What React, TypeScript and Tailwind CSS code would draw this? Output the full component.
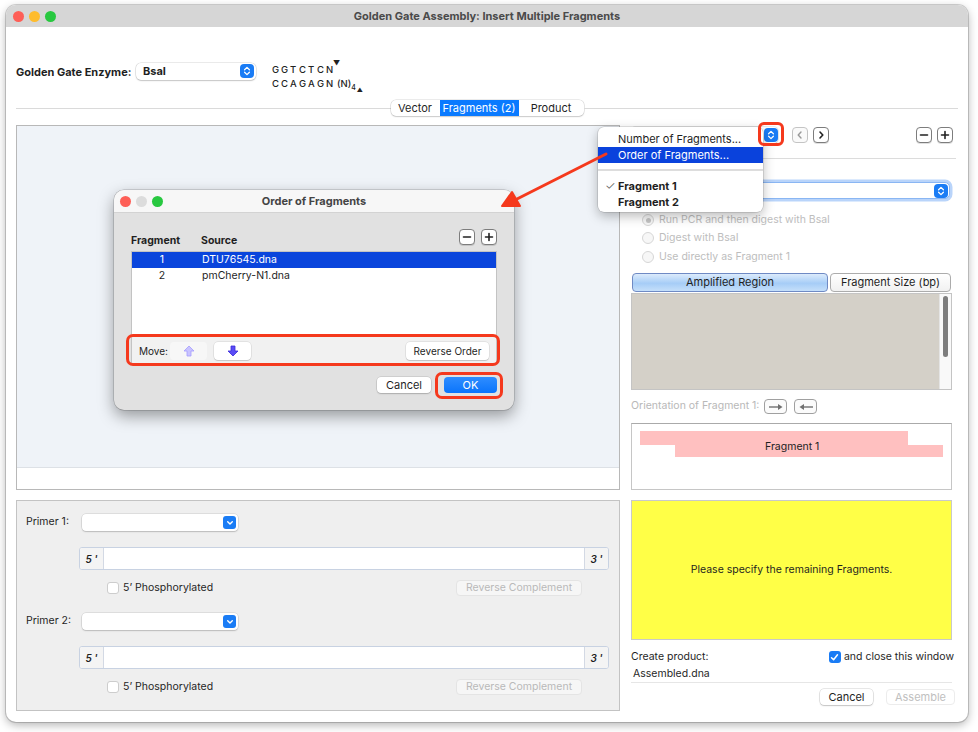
import React from "react";

function Stepper() {
  return (
    <span className="inline-flex w-[14px] h-[14px] rounded-[4px] bg-[#1a7cf5] items-center justify-center shrink-0">
      <svg width="8" height="10" viewBox="0 0 8 10" fill="none">
        <path d="M1.6 3.7L4 1.4L6.4 3.7M1.6 6.3L4 8.6L6.4 6.3" stroke="white" strokeWidth="1.3" strokeLinecap="round" strokeLinejoin="round" />
      </svg>
    </span>
  );
}

function ChevronBox() {
  return (
    <span className="inline-flex w-[13px] h-[13px] rounded-[3px] bg-[#1a7cf5] items-center justify-center shrink-0">
      <svg width="8" height="6" viewBox="0 0 8 6" fill="none">
        <path d="M1.7 1.8L4 4.1L6.3 1.8" stroke="white" strokeWidth="1.4" strokeLinecap="round" strokeLinejoin="round" />
      </svg>
    </span>
  );
}

function SmallBtn({ kind, dim }: { kind: "minus" | "plus" | "left" | "right"; dim?: boolean }) {
  const c = dim ? "#9a9a9a" : "#222";
  return (
    <span
      className={
        dim
          ? "inline-flex w-[16px] h-[16px] rounded-[4px] bg-[#fafafa] border border-[#c4c4c4] items-center justify-center shrink-0"
          : "inline-flex w-[16px] h-[16px] rounded-[4px] bg-white border border-[#7d7d7d] shadow-[0_1px_0_rgba(0,0,0,0.12)] items-center justify-center shrink-0"
      }
    >
      <svg width="10" height="10" viewBox="0 0 10 10" fill="none">
        {kind === "minus" && <path d="M1.5 5H8.5" stroke={c} strokeWidth="1.6" strokeLinecap="round" />}
        {kind === "plus" && <path d="M1.5 5H8.5M5 1.5V8.5" stroke={c} strokeWidth="1.6" strokeLinecap="round" />}
        {kind === "left" && <path d="M6 2L3.2 5L6 8" stroke={c} strokeWidth="1.4" strokeLinecap="round" strokeLinejoin="round" />}
        {kind === "right" && <path d="M4 2L6.8 5L4 8" stroke={c} strokeWidth="1.6" strokeLinecap="round" strokeLinejoin="round" />}
      </svg>
    </span>
  );
}

function Primer({ n }: { n: number }) {
  return (
    <>
      <div className="flex items-center h-[17px]">
        <span className="w-[65px] pl-[9px]">Primer {n}:</span>
        <div className="w-[156px] h-[17px] bg-white rounded-[4px] shadow-[0_0_0_0.5px_rgba(0,0,0,0.14),0_1px_1.5px_rgba(0,0,0,0.16)] flex items-center justify-end pr-[2px]">
          <ChevronBox />
        </div>
      </div>
      <div className="mt-[16px] ml-[62px] mr-[10px] h-[23px] flex border border-[#c8d2e2] rounded-[3px] bg-white overflow-hidden">
        <span className="w-[24px] bg-[#f4f4f4] border-r border-[#d3d9e4] flex items-center justify-center italic font-semibold text-[10px]">5 '</span>
        <span className="flex-1" />
        <span className="w-[24px] bg-[#f4f4f4] border-l border-[#d3d9e4] flex items-center justify-center italic font-semibold text-[10px]">3 '</span>
      </div>
      <div className="mt-[10px] flex items-center h-[16px]">
        <span className="ml-[90px] w-[12px] h-[12px] rounded-[3px] bg-white border border-[#cdcdcd]" />
        <span className="ml-[4px]">5’ Phosphorylated</span>
        <span className="ml-auto mr-[37px] w-[126px] h-[16px] rounded-[4px] bg-[#f6f6f6] border border-[#e4e4e4] text-[#b9b9b9] flex items-center justify-center">
          Reverse Complement
        </span>
      </div>
    </>
  );
}

function Radio({ on, label }: { on?: boolean; label: string }) {
  return (
    <div className="flex items-center h-[12px]">
      <span className="ml-[11px] w-[12px] h-[12px] rounded-full border border-[#d6d6d6] bg-[#f7f7f7] flex items-center justify-center">
        {on && <span className="w-[5px] h-[5px] rounded-full bg-[#c4c4c4]" />}
      </span>
      <span className="ml-[5px] text-[#bdbdbd]">{label}</span>
    </div>
  );
}

function OrientBtn({ dir }: { dir: "r" | "l" }) {
  return (
    <span className="inline-flex w-[23px] h-[15px] rounded-[4px] border border-[#a0a0a0] bg-[#fbfbfb] items-center justify-center">
      <svg width="16" height="8" viewBox="0 0 16 8" fill="none">
        {dir === "r" ? (
          <>
            <path d="M1 4H13" stroke="#707070" strokeWidth="1.4" />
            <path d="M10 1L14.5 4L10 7Z" fill="#707070" />
          </>
        ) : (
          <>
            <path d="M3 4H15" stroke="#707070" strokeWidth="1.4" />
            <path d="M6 1L1.5 4L6 7Z" fill="#707070" />
          </>
        )}
      </svg>
    </span>
  );
}

function MoveArrow({ up }: { up?: boolean }) {
  return up ? (
    <svg width="12" height="12" viewBox="0 0 12 12">
      <path d="M6 1L11 6H8V11H4V6H1Z" fill="#c9c3ff" stroke="#a49cff" strokeWidth="0.8" strokeLinejoin="round" />
    </svg>
  ) : (
    <svg width="12" height="12" viewBox="0 0 12 12">
      <path d="M6 11L11 6H8V1H4V6H1Z" fill="#5a4cf6" stroke="#3a2bd8" strokeWidth="0.8" strokeLinejoin="round" />
    </svg>
  );
}

export default function App() {
  return (
    <div className="relative w-[978px] h-[732px] overflow-hidden bg-white pt-[5px] pl-[6px] font-['Inter',sans-serif] text-[10.5px] text-[#1f1f1f] leading-none">
      {/* main window */}
      <div className="w-[962px] h-[717px] rounded-[10px] bg-white overflow-hidden flex flex-col shadow-[0_0_0_1px_rgba(0,0,0,0.16),0_3px_10px_rgba(0,0,0,0.3)]">
        <div className="h-[22px] shrink-0 bg-[#d6d6d6] grid grid-cols-[1fr_auto_1fr] items-center px-[7px]">
          <div className="flex gap-[5px]">
            <span className="w-[11px] h-[11px] rounded-full bg-[#fe5f57]" />
            <span className="w-[11px] h-[11px] rounded-full bg-[#febc2e]" />
            <span className="w-[11px] h-[11px] rounded-full bg-[#28c840]" />
          </div>
          <div className="font-bold text-[#4a4a4a] text-[11px]">Golden Gate Assembly: Insert Multiple Fragments</div>
          <div />
        </div>

        <div className="flex-1 px-[10px] flex flex-col">
          {/* enzyme row */}
          <div className="mt-[33px] h-[30px] flex items-start">
            <span className="w-[120px] mt-[7px] font-bold text-[11px]">Golden Gate Enzyme:</span>
            <div className="mt-[3px] w-[120px] h-[17px] bg-white rounded-[5px] shadow-[0_0_0_0.5px_rgba(0,0,0,0.16),0_1px_1.5px_rgba(0,0,0,0.16)] flex items-center pl-[7px] pr-[2px]">
              <span className="font-bold text-[11px]">BsaI</span>
              <span className="ml-auto">
                <Stepper />
              </span>
            </div>
            <div className="ml-[16px] mt-[3px] text-[9.5px] font-medium text-[#222]">
              <div className="flex items-start h-[14px]">
                {"GGTCTCN".split("").map((c, i) => (
                  <span key={i} className="w-[9px] mt-[2px]">{c}</span>
                ))}
                <span className="text-[7px] -ml-[2px] -mt-[3px]">▼</span>
              </div>
              <div className="flex items-start h-[14px]">
                {"CCAGAGN".split("").map((c, i) => (
                  <span key={i} className="w-[9px] mt-[2px]">{c}</span>
                ))}
                <span className="mt-[2px] ml-[2px]">(N)</span>
                <span className="mt-[7px] text-[7px]">4</span>
                <span className="mt-[10px] ml-[1px] text-[6px]">▲</span>
              </div>
            </div>
          </div>

          {/* tabs */}
          <div className="mt-[10px] h-[16px] flex items-center">
            <div className="flex-1 h-px bg-[#dadada]" />
            <div className="flex h-[16px] rounded-[5px] bg-white overflow-hidden shadow-[0_0_0_0.5px_rgba(0,0,0,0.16),0_1px_1.5px_rgba(0,0,0,0.14)] text-[11px]">
              <span className="w-[49px] flex items-center justify-center">Vector</span>
              <span className="w-[79px] flex items-center justify-center bg-[#0a7aff] text-white">Fragments (2)</span>
              <span className="w-[65px] flex items-center justify-center">Product</span>
            </div>
            <div className="flex-1 h-px bg-[#dadada]" />
          </div>

          {/* main */}
          <div className="mt-[9px] flex gap-[11px]">
            {/* left */}
            <div className="w-[604px] flex flex-col">
              <div className="h-[365px] border border-[#b8b8b8] bg-[#eff3f8] flex flex-col">
                <div className="flex-1" />
                <div className="h-[22px] bg-white border-t border-[#dde1e6]" />
              </div>
              <div className="mt-[10px] h-[211px] border border-[#c3c3c3] bg-[#efefef] pt-[13px] flex flex-col">
                <Primer n={1} />
                <div className="h-[17px]" />
                <Primer n={2} />
              </div>
            </div>

            {/* right */}
            <div className="w-[321px] flex flex-col">
              <div className="mt-[2px] h-[16px] flex items-center">
                <div className="w-[147px] h-[16px] rounded-[4px] bg-white shadow-[0_0_0_0.5px_rgba(0,0,0,0.16),0_1px_1.5px_rgba(0,0,0,0.14)] flex items-center justify-end">
                  <Stepper />
                </div>
                <span className="ml-[14px]">
                  <SmallBtn kind="left" dim />
                </span>
                <span className="ml-[5px]">
                  <SmallBtn kind="right" />
                </span>
                <span className="ml-auto">
                  <SmallBtn kind="minus" />
                </span>
                <span className="ml-[5px] -mr-px">
                  <SmallBtn kind="plus" />
                </span>
              </div>
              <div className="mt-[15px] h-px bg-[#dcdcdc] -mr-[4px]" />
              <div className="mt-[23px] h-[17px] flex items-center">
                <span className="w-[50px]" />
                <div className="flex-1 mr-[2px] h-[17px] bg-white rounded-[5px] border border-[#8ab6f3] shadow-[0_0_0_2.5px_rgba(100,160,245,0.45)] flex items-center justify-end pr-[1px]">
                  <Stepper />
                </div>
              </div>
              <div className="mt-[15px] flex flex-col">
                <Radio on label="Run PCR and then digest with BsaI" />
                <div className="h-[6px]" />
                <Radio label="Digest with BsaI" />
                <div className="h-[7px]" />
                <Radio label="Use directly as Fragment 1" />
              </div>
              <div className="mt-[10px] h-[20px] flex items-start">
                <span className="ml-[1px] w-[196px] h-[19px] rounded-[4px] border border-[#6f8ac4] bg-[linear-gradient(#dcebfc,#a6cdf7_55%,#c5dffa)] flex items-center justify-center text-[11px]">
                  Amplified Region
                </span>
                <span className="ml-[2px] w-[121px] h-[19px] rounded-[4px] border border-[#acacac] bg-[linear-gradient(#ffffff,#f1f1f1)] flex items-center justify-center text-[11px]">
                  Fragment Size (bp)
                </span>
              </div>
              <div className="h-[97px] border border-[#c4c4c4] bg-[#d4d0c8] flex justify-end">
                <div className="w-[12px] bg-[#f9f9f9] border-l border-[#e4e4e4] pt-[2px] flex justify-center">
                  <div className="w-[5px] h-[61px] rounded-full bg-[#7e7e7e]" />
                </div>
              </div>
              <div className="mt-[9px] h-[15px] flex items-center">
                <span className="w-[133px] text-[#b8b8b8]">Orientation of Fragment 1:</span>
                <OrientBtn dir="r" />
                <span className="ml-[7px]">
                  <OrientBtn dir="l" />
                </span>
              </div>
              <div className="mt-[9px] h-[67px] border border-[#c6c6c6] border-t-[#aaaaaa] bg-white relative">
                <svg width="321" height="66" viewBox="0 0 321 66" className="block">
                  <rect x="8" y="7" width="268" height="14" fill="#ffc0c0" />
                  <rect x="43" y="21" width="268" height="12" fill="#ffc0c0" />
                </svg>
                <span className="absolute left-[133px] top-[18px] text-[#222]">Fragment 1</span>
              </div>
              <div className="mt-[10px] h-[140px] bg-[#ffff47] border border-[#c9c9c9] flex items-center justify-center">
                Please specify the remaining Fragments.
              </div>
              <div className="mt-[10px] h-[14px] flex items-center">
                <span>Create product:</span>
                <span className="ml-auto w-[12px] h-[12px] rounded-[3px] bg-[#1a7cf5] flex items-center justify-center">
                  <svg width="9" height="9" viewBox="0 0 9 9" fill="none">
                    <path d="M1.5 4.7L3.6 6.8L7.5 1.8" stroke="white" strokeWidth="1.5" strokeLinecap="round" strokeLinejoin="round" />
                  </svg>
                </span>
                <span className="ml-[3px] -mr-[2px]">and close this window</span>
              </div>
              <div className="mt-[3px] h-[16px] bg-white border-b border-[#e6e6e6] pl-[2px] flex items-center">Assembled.dna</div>
              <div className="mt-[6px] h-[16px] flex justify-end gap-[13px] -mr-[3px]">
                <span className="w-[53px] h-[16px] rounded-[4px] bg-white shadow-[0_0_0_0.5px_rgba(0,0,0,0.18),0_1px_1.5px_rgba(0,0,0,0.16)] flex items-center justify-center text-[11px]">Cancel</span>
                <span className="w-[69px] h-[16px] rounded-[4px] bg-white border border-[#ececec] text-[#c0c0c0] flex items-center justify-center text-[11px]">Assemble</span>
              </div>
            </div>
          </div>
        </div>
      </div>

      {/* Order of Fragments dialog */}
      <div className="absolute left-[114px] top-[190px] w-[400px] h-[220px] rounded-[10px] overflow-hidden bg-[#e1e1e1] flex flex-col shadow-[0_0_0_0.5px_rgba(0,0,0,0.25),0_6px_16px_rgba(0,0,0,0.38)]">
        <div className="h-[23px] shrink-0 bg-[#f7f7f7] border-b border-[#d3d3d3] grid grid-cols-[1fr_auto_1fr] items-center px-[6px]">
          <div className="flex gap-[5px]">
            <span className="w-[11px] h-[11px] rounded-full bg-[#fe5f57]" />
            <span className="w-[11px] h-[11px] rounded-full bg-[#dcdcdc]" />
            <span className="w-[11px] h-[11px] rounded-full bg-[#28c840]" />
          </div>
          <div className="font-bold text-[#444] text-[11px]">Order of Fragments</div>
          <div />
        </div>
        <div className="px-[17px] pt-[16px] flex flex-col">
          <div className="h-[22px] flex items-start">
            <span className="w-[70px] mt-[7px] font-bold">Fragment</span>
            <span className="mt-[7px] font-bold">Source</span>
            <span className="ml-auto">
              <SmallBtn kind="minus" />
            </span>
            <span className="ml-[6px]">
              <SmallBtn kind="plus" />
            </span>
          </div>
          <div className="h-[114px] bg-white border border-[#c3c3c3] flex flex-col">
            <div className="h-[16px] bg-[#0a45dc] text-white flex items-center">
              <span className="w-[60px] text-center">1</span>
              <span className="pl-[10px]">DTU76545.dna</span>
            </div>
            <div className="h-[16px] flex items-center">
              <span className="w-[60px] text-center">2</span>
              <span className="pl-[10px]">pmCherry-N1.dna</span>
            </div>
            <div className="flex-1" />
            <div className="h-[28px] bg-[#f1f1f1] border-t border-[#dadada] flex items-center px-[7px]">
              <span className="w-[31px] text-[10px]">Move:</span>
              <span className="w-[37px] h-[18px] rounded-[4px] bg-[#f7f7f7] flex items-center justify-center">
                <MoveArrow up />
              </span>
              <span className="ml-[7px] w-[37px] h-[18px] rounded-[4px] bg-white shadow-[0_0_0_0.5px_rgba(0,0,0,0.12),0_1px_1px_rgba(0,0,0,0.12)] flex items-center justify-center">
                <MoveArrow />
              </span>
              <span className="ml-auto w-[83px] h-[18px] rounded-[4px] bg-white shadow-[0_0_0_0.5px_rgba(0,0,0,0.12),0_1px_1px_rgba(0,0,0,0.14)] flex items-center justify-center text-[10px]">
                Reverse Order
              </span>
            </div>
          </div>
          <div className="mt-[12px] flex justify-end gap-[13px]">
            <span className="w-[54px] h-[16px] rounded-[4px] bg-white shadow-[0_0_0_0.5px_rgba(0,0,0,0.16),0_1px_1.5px_rgba(0,0,0,0.16)] flex items-center justify-center text-[11px]">Cancel</span>
            <span className="w-[53px] h-[16px] rounded-[4px] bg-[linear-gradient(#2f8dff,#0a74fb)] text-white flex items-center justify-center text-[11px]">OK</span>
          </div>
        </div>
      </div>

      {/* popup menu */}
      <div className="absolute left-[598px] top-[127px] w-[165px] h-[85px] bg-white rounded-[6px] pt-[4px] shadow-[0_0_0_0.5px_rgba(0,0,0,0.2),0_4px_12px_rgba(0,0,0,0.28)] text-[11px]">
        <div className="h-[16px] flex items-center pl-[20px]">Number of Fragments...</div>
        <div className="h-[16px] flex items-center pl-[20px] bg-[#0a42dc] text-white">Order of Fragments...</div>
        <div className="mt-[6px] h-[2px] bg-[#dddddd]" />
        <div className="mt-[7px] h-[16px] flex items-center font-bold">
          <span className="w-[20px] pl-[7px] font-light text-[12px] text-[#555]">✓</span>
          Fragment 1
        </div>
        <div className="h-[16px] flex items-center font-bold pl-[20px]">Fragment 2</div>
      </div>

      {/* red annotation highlights */}
      <div className="absolute left-[126px] top-[334px] w-[374px] h-[32px] rounded-[7px] border-[3px] border-[#f5391d]" />
      <div className="absolute left-[435px] top-[372px] w-[68px] h-[27px] rounded-[7px] border-[3px] border-[#f5391d]" />
      <div className="absolute left-[758px] top-[122px] w-[26px] h-[24px] rounded-[6px] border-[3px] border-[#f5391d]" />
      <svg className="absolute left-[495px] top-[145px]" width="120" height="70" viewBox="0 0 120 70" fill="none">
        <path d="M111 9L20 55" stroke="#f5391d" strokeWidth="3" strokeLinecap="round" />
        <path d="M7 61L17 47L25 61Z" fill="#f5391d" stroke="#f5391d" strokeWidth="2" strokeLinejoin="round" />
      </svg>
    </div>
  );
}
